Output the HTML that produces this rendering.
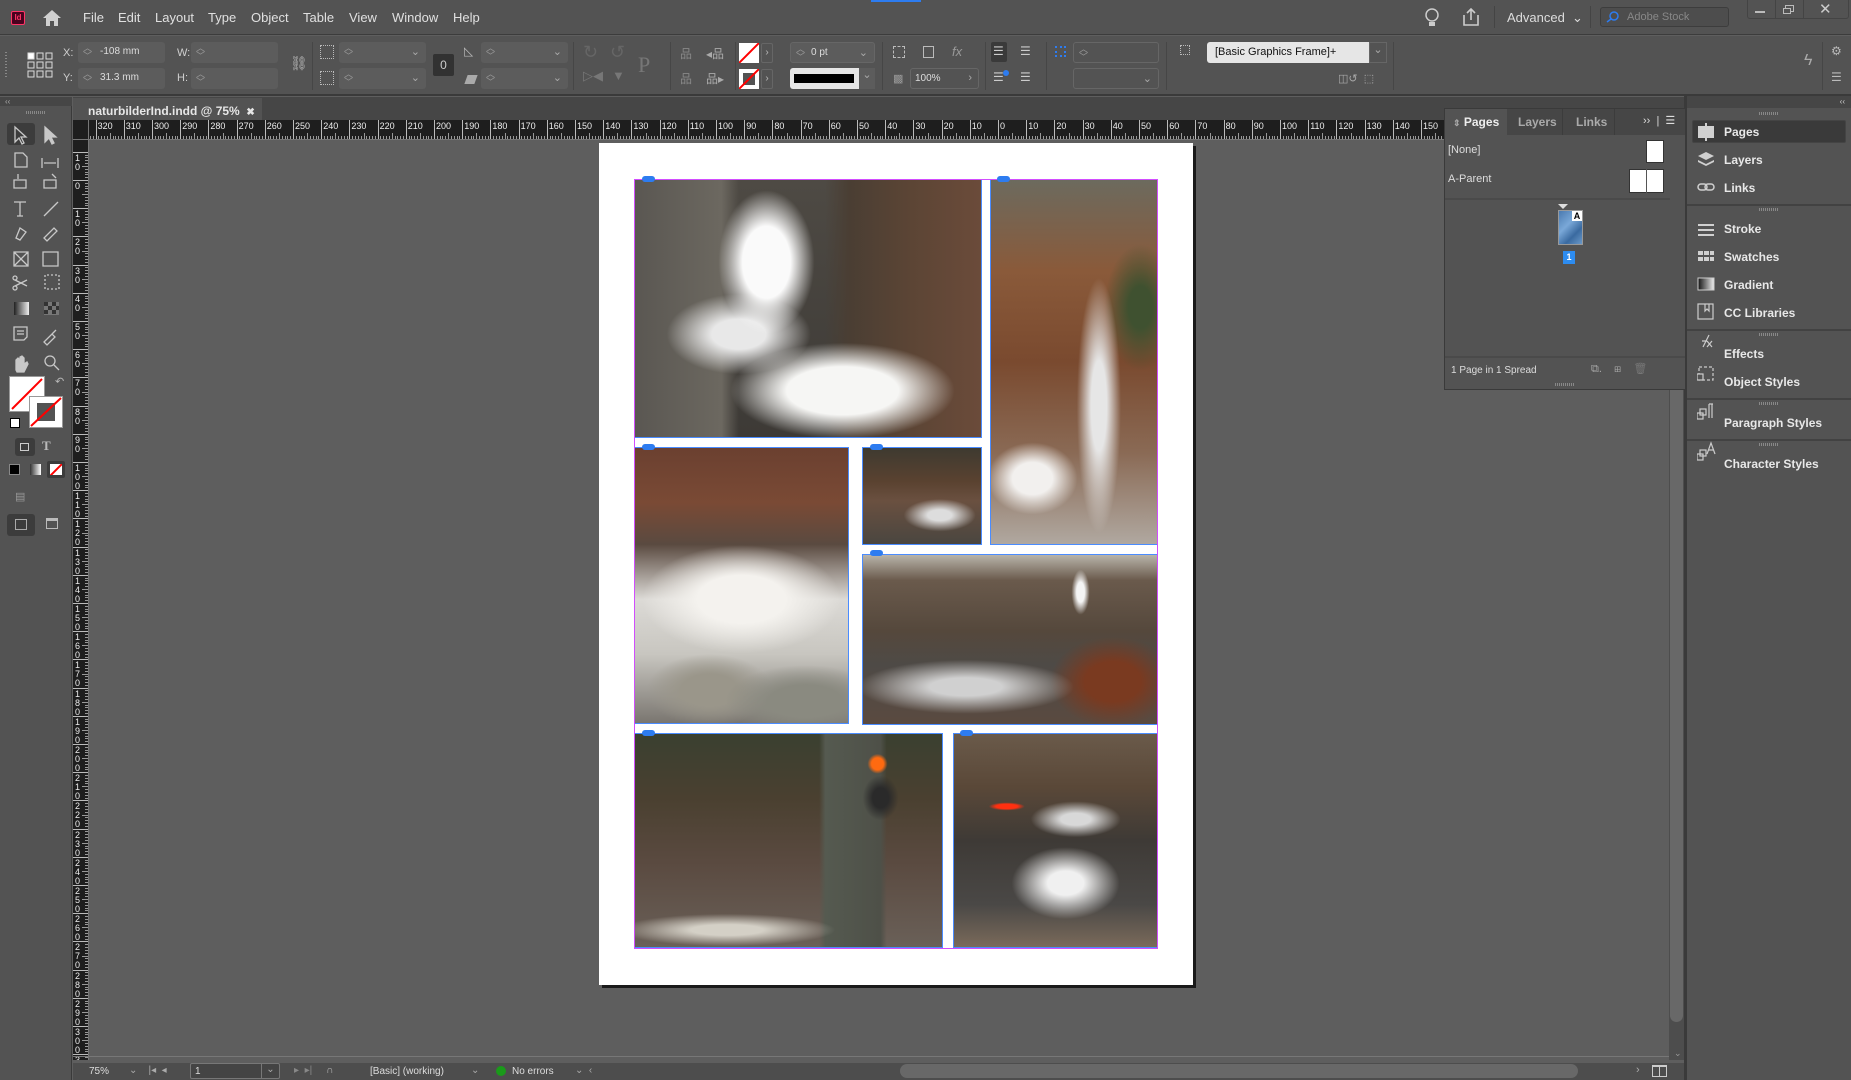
<!DOCTYPE html>
<html><head><meta charset="utf-8">
<style>
*{margin:0;padding:0;box-sizing:border-box}
body{width:1851px;height:1080px;overflow:hidden;background:#5e5e5e;font-family:"Liberation Sans",Arial,sans-serif;font-size:12px;color:#d6d6d6;position:relative}
.a{position:absolute}
.menu span{position:absolute;top:10px;font-size:13px;color:#e0e0e0}
.fld{position:absolute;background:#5c5c5c;border-radius:3px;height:21px}
.fld .sp{position:absolute;left:5px;top:2px;color:#999;font-size:9px;line-height:8px}
.fld .dd{position:absolute;right:6px;top:3px;color:#aaa;font-size:11px}
.lbl{position:absolute;color:#cfcfcf;font-size:11px}
.ic{position:absolute;color:#b8b8b8}
.photo{position:absolute;border:1px solid #4a8cff;overflow:hidden}
.lnk{position:absolute;width:13px;height:6px;background:#2d7cf0;border-radius:3px}
.dock div.it{position:absolute;left:1724px;font-size:12px;font-weight:bold;color:#e8e8e8}
.dock .sep{position:absolute;left:1687px;width:164px;height:2px;background:#424242}
.grip{position:absolute;width:20px;height:3px;background:repeating-linear-gradient(90deg,#888 0 1px,transparent 1px 2px)}
</style></head><body>

<!-- menu bar -->
<div class="a" style="left:0;top:0;width:1851px;height:35px;background:#535353;border-bottom:1px solid #3c3c3c"></div>
<div class="a" style="left:871px;top:0;width:50px;height:2px;background:#2d7cf0"></div>
<div class="a" style="left:11px;top:11px;width:14px;height:14px;background:#49021f;border:1px solid #ff3366;border-radius:2px;color:#ff3366;font-size:8px;line-height:12px;text-align:center;font-weight:bold">Id</div>
<svg class="a" style="left:42px;top:9px" width="20" height="18"><path d="M10 1L1 9h3v8h4v-5h4v5h4V9h3z" fill="#d0d0d0"/></svg>
<div class="menu">
<span style="left:83px">File</span><span style="left:118px">Edit</span><span style="left:155px">Layout</span><span style="left:208px">Type</span><span style="left:251px">Object</span><span style="left:303px">Table</span><span style="left:349px">View</span><span style="left:392px">Window</span><span style="left:453px">Help</span>
</div>
<svg class="a" style="left:1424px;top:7px" width="16" height="22"><circle cx="8" cy="8" r="6" fill="none" stroke="#ccc" stroke-width="1.5"/><rect x="5" y="15" width="6" height="4" fill="#ccc"/></svg>
<svg class="a" style="left:1462px;top:7px" width="18" height="20"><path d="M2 8v10h14V8M9 2v11M5 6l4-4 4 4" fill="none" stroke="#ccc" stroke-width="1.6"/></svg>
<div class="a" style="left:1494px;top:6px;width:1px;height:22px;background:#444"></div>
<div class="a" style="left:1507px;top:10px;font-size:13px;color:#ddd">Advanced&nbsp;&nbsp;⌄</div>
<div class="a" style="left:1590px;top:6px;width:1px;height:22px;background:#444"></div>
<div class="a" style="left:1600px;top:7px;width:129px;height:20px;border:1px solid #3d3d3d;border-radius:3px;background:#4d4d4d;color:#888;font-size:11px;padding:3px 0 0 26px">Adobe Stock</div>
<svg class="a" style="left:1605px;top:11px" width="16" height="12"><circle cx="9" cy="5" r="4" fill="none" stroke="#2d7cf0" stroke-width="1.5"/><path d="M6 8L2 11" stroke="#2d7cf0" stroke-width="1.5"/></svg>
<div class="a" style="left:1747px;top:0;width:102px;height:19px;border:1px solid #444;border-top:none;border-radius:0 0 3px 3px"></div>
<div class="a" style="left:1775px;top:0;width:1px;height:18px;background:#444"></div><div class="a" style="left:1803px;top:0;width:1px;height:18px;background:#444"></div>
<div class="a" style="left:1755px;top:11px;width:10px;height:2px;background:#bbb"></div>
<div class="a" style="left:1785px;top:5px;width:9px;height:7px;border:1px solid #bbb"></div><div class="a" style="left:1783px;top:8px;width:8px;height:6px;border:1px solid #bbb;background:#535353"></div>
<div class="a" style="left:1819px;top:0;font-size:15px;color:#ccc">✕</div>

<!-- control bar -->
<div class="a" style="left:0;top:36px;width:1851px;height:60px;background:#535353;border-bottom:2px solid #3a3a3a"></div>
<div class="a" style="left:5px;top:52px;width:2px;height:26px;background:repeating-linear-gradient(#888 0 1px,transparent 1px 3px)"></div>
<svg class="a" style="left:27px;top:52px" width="26" height="26"><g fill="none" stroke="#ddd"><rect x="1" y="1" width="6" height="6" fill="#fff"/><rect x="10" y="1" width="6" height="6"/><rect x="19" y="1" width="6" height="6"/><rect x="1" y="10" width="6" height="6"/><rect x="10" y="10" width="6" height="6"/><rect x="19" y="10" width="6" height="6"/><rect x="1" y="19" width="6" height="6"/><rect x="10" y="19" width="6" height="6"/><rect x="19" y="19" width="6" height="6"/></g></svg>
<div class="lbl" style="left:63px;top:47px">X:</div><div class="lbl" style="left:63px;top:72px">Y:</div>
<div class="fld" style="left:78px;top:42px;width:87px"><div class="sp">︿<br>﹀</div><span style="position:absolute;left:22px;top:4px;font-size:10px;color:#ddd">-108 mm</span></div>
<div class="fld" style="left:78px;top:68px;width:87px"><div class="sp">︿<br>﹀</div><span style="position:absolute;left:22px;top:4px;font-size:10px;color:#ddd">31.3 mm</span></div>
<div class="lbl" style="left:177px;top:47px">W:</div><div class="lbl" style="left:177px;top:72px">H:</div>
<div class="fld" style="left:191px;top:42px;width:87px"><div class="sp">︿<br>﹀</div></div>
<div class="fld" style="left:191px;top:68px;width:87px"><div class="sp">︿<br>﹀</div></div>
<div class="ic" style="left:290px;top:55px;font-size:14px">⛓</div>
<div class="a" style="left:312px;top:42px;width:1px;height:48px;background:#464646"></div>
<div class="a" style="left:320px;top:45px;width:14px;height:14px;border:1px dotted #bbb"></div>
<div class="a" style="left:320px;top:71px;width:14px;height:14px;border:1px dotted #bbb"></div>
<div class="fld" style="left:339px;top:42px;width:87px"><div class="sp">︿<br>﹀</div><div class="dd">⌄</div></div>
<div class="fld" style="left:339px;top:68px;width:87px"><div class="sp">︿<br>﹀</div><div class="dd">⌄</div></div>
<div class="a" style="left:433px;top:54px;width:21px;height:22px;background:#323232;border-radius:2px;color:#ccc;font-size:12px;text-align:center;line-height:22px">0</div>
<div class="ic" style="left:464px;top:44px;font-size:12px">◺</div>
<div class="a" style="left:466px;top:75px;width:10px;height:9px;background:#aaa;transform:skewX(-20deg)"></div>
<div class="fld" style="left:481px;top:42px;width:87px"><div class="sp">︿<br>﹀</div><div class="dd">⌄</div></div>
<div class="fld" style="left:481px;top:68px;width:87px"><div class="sp">︿<br>﹀</div><div class="dd">⌄</div></div>
<div class="a" style="left:573px;top:42px;width:1px;height:48px;background:#464646"></div>
<div class="ic" style="left:583px;top:42px;font-size:18px;color:#666">↻</div><div class="ic" style="left:610px;top:42px;font-size:18px;color:#666">↺</div>
<div class="ic" style="left:583px;top:68px;font-size:13px;color:#777">▷◀</div><div class="ic" style="left:612px;top:68px;font-size:13px;color:#777">▼</div>
<div class="a" style="left:638px;top:52px;font-family:'Liberation Serif',serif;font-size:22px;color:#777">P</div>
<div class="a" style="left:670px;top:42px;width:1px;height:48px;background:#464646"></div>
<div class="ic" style="left:680px;top:45px;font-size:12px;color:#888">品</div><div class="ic" style="left:706px;top:45px;font-size:12px;color:#aaa">◂品</div>
<div class="ic" style="left:680px;top:70px;font-size:12px;color:#888">品</div><div class="ic" style="left:706px;top:70px;font-size:12px;color:#aaa">品▸</div>
<div class="a" style="left:735px;top:42px;width:1px;height:48px;background:#464646"></div>
<svg class="a" style="left:739px;top:43px" width="20" height="20"><rect width="20" height="20" fill="#fff"/><path d="M0 20L20 0" stroke="#f00" stroke-width="2"/></svg>
<svg class="a" style="left:739px;top:69px" width="20" height="20"><rect width="20" height="20" fill="#fff"/><rect x="4" y="4" width="12" height="12" fill="#535353"/><path d="M0 20L20 0" stroke="#f00" stroke-width="2"/></svg>
<div class="a" style="left:761px;top:43px;width:12px;height:20px;border:1px solid #666;border-radius:2px;color:#bbb;font-size:10px;text-align:center;line-height:18px">›</div>
<div class="a" style="left:761px;top:69px;width:12px;height:20px;border:1px solid #666;border-radius:2px;color:#bbb;font-size:10px;text-align:center;line-height:18px">›</div>
<div class="fld" style="left:790px;top:42px;width:85px;border:1px solid #666"><div class="sp">︿<br>﹀</div><span style="position:absolute;left:20px;top:4px;font-size:10px;color:#ddd">0 pt</span><div class="dd">⌄</div></div>
<div class="a" style="left:790px;top:68px;width:85px;height:21px;background:#e6e6e6;border-radius:3px"><div style="position:absolute;left:4px;top:6px;width:60px;height:9px;background:#000"></div><div style="position:absolute;right:0;top:0;width:16px;height:21px;background:#5c5c5c;color:#aaa;text-align:center;font-size:11px">⌄</div></div>
<div class="a" style="left:882px;top:42px;width:1px;height:48px;background:#464646"></div>
<div class="a" style="left:893px;top:46px;width:12px;height:12px;border:1px dashed #bbb"></div>
<div class="a" style="left:923px;top:46px;width:11px;height:12px;border:1px solid #bbb"></div>
<div class="ic" style="left:952px;top:44px;font-style:italic;font-size:13px;color:#999">fx</div>
<div class="ic" style="left:893px;top:72px;font-size:11px;color:#999">▩</div>
<div class="fld" style="left:910px;top:68px;width:69px;border:1px solid #666;background:#535353"><span style="position:absolute;left:4px;top:4px;font-size:10px;color:#ddd">100%</span><div class="dd">›</div></div>
<div class="a" style="left:985px;top:42px;width:1px;height:48px;background:#464646"></div>
<div class="a" style="left:991px;top:42px;width:16px;height:20px;background:#3a3a3a;border-radius:2px"></div>
<div class="ic" style="left:993px;top:44px;font-size:12px;color:#ccc">☰</div><div class="ic" style="left:1020px;top:44px;font-size:12px;color:#ccc">☰</div>
<div class="ic" style="left:993px;top:70px;font-size:12px;color:#ccc">☰</div><div class="a" style="left:1003px;top:70px;width:6px;height:6px;border-radius:3px;background:#2d7cf0"></div><div class="ic" style="left:1020px;top:70px;font-size:12px;color:#ccc">☰</div>
<div class="a" style="left:1046px;top:42px;width:1px;height:48px;background:#464646"></div>
<div class="a" style="left:1055px;top:46px;width:11px;height:11px;border:2px dotted #2d7cf0"></div>
<div class="fld" style="left:1073px;top:42px;width:86px;border:1px solid #666;background:#535353"><div class="sp">︿<br>﹀</div></div>
<div class="fld" style="left:1073px;top:68px;width:86px;border:1px solid #666;background:#535353"><div class="dd">⌄</div></div>
<div class="a" style="left:1166px;top:42px;width:1px;height:48px;background:#464646"></div>
<div class="a" style="left:1180px;top:45px;width:10px;height:10px;border:1px dotted #bbb"></div>
<div class="a" style="left:1207px;top:42px;width:180px;height:21px;background:#e6e6e6;border-radius:3px;color:#111;font-size:11px;padding:4px 0 0 8px">[Basic Graphics Frame]+<div style="position:absolute;right:0;top:0;width:18px;height:21px;background:#535353;border:1px solid #666;color:#aaa;text-align:center;font-size:11px">⌄</div></div>
<div class="ic" style="left:1338px;top:72px;font-size:11px;color:#aaa">◫↺&nbsp;&nbsp;⬚</div>
<div class="a" style="left:1393px;top:42px;width:1px;height:48px;background:#464646"></div>
<div class="ic" style="left:1804px;top:52px;font-size:16px;color:#aaa">ϟ</div>
<div class="a" style="left:1822px;top:42px;width:1px;height:48px;background:#464646"></div>
<div class="ic" style="left:1831px;top:44px;font-size:12px;color:#bbb">⚙</div>
<div class="ic" style="left:1831px;top:70px;font-size:12px;color:#bbb">☰</div>

<!-- tools panel -->
<div class="a" style="left:0;top:97px;width:72px;height:983px;background:#535353;border-right:1px solid #3a3a3a"></div>
<div class="a" style="left:0;top:97px;width:72px;height:9px;background:#464646;color:#aaa;font-size:8px;padding-left:5px;line-height:9px">‹‹</div>
<div class="grip" style="left:26px;top:111px"></div>
<div class="a" style="left:7px;top:123px;width:28px;height:22px;background:#3c3c3c;border-radius:3px"></div>
<svg class="a" style="left:0;top:120px" width="72" height="420">
<g fill="none" stroke="#c8c8c8" stroke-width="1.3">
<path d="M15 7l0 15 4-4 3 6 2-1-3-6 5 0z"/>
<path d="M45 7l0 15 4-4 3 6 2-1-3-6 5 0z" fill="#c8c8c8"/>
<path d="M15 33h8l4 4v10h-12z"/><path d="M42 38v10M58 38v10M44 43h12"/>
<path d="M14 60h12v8h-12zM18 54v5"/><path d="M44 60h12v8h-12zM52 54l4 4"/>
<path d="M14 82h12M20 82v14M17 96h6"/><path d="M44 96l14-14"/>
<path d="M16 118l4-10 6 4-6 8z"/><path d="M44 118l10-10 3 3-10 10z"/>
<path d="M14 132h14v14h-14zM14 132l14 14M28 132l-14 14"/><path d="M43 132h15v14h-15z"/>
<path d="M15 160l12 6M15 166l12-6"/><circle cx="15" cy="158" r="2"/><circle cx="15" cy="168" r="2"/><path d="M45 155v14h14v-14z" stroke-dasharray="2 2"/>
</g>
<defs><linearGradient id="g1"><stop offset="0" stop-color="#222"/><stop offset="1" stop-color="#eee"/></linearGradient></defs>
<rect x="14" y="182" width="15" height="13" fill="url(#g1)"/>
<rect x="44" y="182" width="15" height="13" fill="#777"/><rect x="44" y="182" width="4" height="4" fill="#333"/><rect x="52" y="182" width="4" height="4" fill="#333"/><rect x="48" y="186" width="4" height="4" fill="#333"/><rect x="56" y="186" width="3" height="4" fill="#333"/><rect x="44" y="190" width="4" height="4" fill="#333"/><rect x="52" y="190" width="4" height="4" fill="#333"/>
<g fill="none" stroke="#c8c8c8" stroke-width="1.3"><path d="M14 207h13v10l-3 3h-10zM17 211h7M17 214h7"/><path d="M44 222l8-8 3 3-8 8zM52 214l4-4"/>
<path d="M16 250v-10l2-2 2 2v-3l2-1 2 2v6l3-2 1 2-4 8h-7z" fill="#c8c8c8"/><circle cx="50" cy="241" r="5"/><path d="M54 245l5 5"/></g>
</svg>
<div class="a" style="left:9px;top:376px;width:36px;height:36px;background:#fff;border:1px solid #999"><svg width="34" height="34"><path d="M2 32L32 2" stroke="#f00" stroke-width="2"/></svg></div>
<div class="a" style="left:29px;top:396px;width:34px;height:32px;background:#fff;border:1px solid #999"><div style="position:absolute;left:7px;top:6px;width:18px;height:18px;background:#535353"></div><svg width="32" height="30" style="position:absolute;left:0;top:0"><path d="M1 29L31 1" stroke="#f00" stroke-width="2"/></svg></div>
<div class="ic" style="left:55px;top:375px;font-size:11px">↶</div>
<div class="a" style="left:10px;top:418px;width:10px;height:10px;background:#fff;border:1px solid #000"></div>
<div class="a" style="left:15px;top:438px;width:20px;height:18px;background:#3c3c3c;border-radius:3px"></div><div class="a" style="left:20px;top:443px;width:9px;height:8px;border:1px solid #ccc"></div>
<div class="a" style="left:42px;top:438px;font-family:'Liberation Serif',serif;font-weight:bold;color:#bbb;font-size:13px">T</div>
<div class="a" style="left:9px;top:464px;width:11px;height:11px;background:#000;border:1px solid #888"></div>
<div class="a" style="left:30px;top:464px;width:11px;height:11px;background:linear-gradient(90deg,#333,#fff)"></div>
<div class="a" style="left:47px;top:461px;width:18px;height:17px;background:#3c3c3c;border-radius:2px"></div><div class="a" style="left:50px;top:464px;width:12px;height:11px;background:#fff;overflow:hidden"><div style="width:18px;height:2px;background:#f00;transform:translate(-3px,5px) rotate(-45deg)"></div></div>
<div class="ic" style="left:15px;top:490px;font-size:11px;color:#999">▤</div>
<div class="a" style="left:7px;top:514px;width:28px;height:22px;background:#3c3c3c;border-radius:3px"></div><div class="a" style="left:15px;top:519px;width:12px;height:11px;border:1px solid #aaa"></div>
<div class="a" style="left:46px;top:518px;width:12px;height:11px;border:1px solid #bbb;border-top-width:3px"></div>

<!-- tab bar -->
<div class="a" style="left:73px;top:97px;width:1614px;height:23px;background:#464646"></div>
<div class="a" style="left:73px;top:98px;width:189px;height:23px;background:#535353;font-weight:bold;font-size:12px;color:#e6e6e6;padding:6px 0 0 15px">naturbilderInd.indd @ 75% &nbsp;<span style="font-size:10px">✖</span></div>

<!-- rulers -->
<div class="a" id="hr" style="left:73px;top:120px;width:1612px;height:20px;background:#1e1e1e;overflow:hidden;border-bottom:1px solid #777"></div>
<div class="a" id="vr" style="left:73px;top:120px;width:16px;height:940px;background:#1e1e1e;overflow:hidden;border-right:1px solid #777"></div>
<div class="a" style="left:73px;top:120px;width:16px;height:20px;background:#1e1e1e;border-right:1px solid #777;border-bottom:1px solid #777"></div>

<!-- page -->
<div class="a" style="left:602px;top:146px;width:594px;height:842px;background:#1a1a1a"></div>
<div class="a" style="left:599px;top:143px;width:594px;height:842px;background:#fff"></div>

<div class="photo" style="left:634px;top:179px;width:348px;height:259px;background:
radial-gradient(ellipse 60px 90px at 38% 32%,#fafafa 40%,transparent 80%),
radial-gradient(ellipse 140px 60px at 60% 82%,#f6f6f4 40%,transparent 80%),
radial-gradient(ellipse 90px 50px at 30% 60%,#e8e8e8 30%,transparent 80%),
linear-gradient(90deg,#5a5752 0%,#6c6860 25%,transparent 30%,transparent 55%,#4a3e33 62%,#5c4535 80%,#6b4b3a 100%),
linear-gradient(#4e4a44,#3d3a36)"></div>
<div class="photo" style="left:990px;top:179px;width:168px;height:366px;background:
radial-gradient(ellipse 50px 40px at 25% 82%,#f2f0ee 40%,transparent 90%),
radial-gradient(ellipse 26px 150px at 65% 62%,#e6e6e6 30%,transparent 85%),
radial-gradient(ellipse 40px 70px at 90% 35%,#3f5130 30%,transparent 90%),
linear-gradient(#6c6a5e 0%,#8a5a3a 25%,#7a4a2f 50%,#8a6a55 75%,#b0a8a0 100%)"></div>
<div class="photo" style="left:634px;top:447px;width:215px;height:277px;background:
radial-gradient(ellipse 90px 40px at 80% 92%,#8a8a80 40%,transparent 90%),
radial-gradient(ellipse 70px 40px at 35% 88%,#9a968a 40%,transparent 90%),
radial-gradient(ellipse 110px 60px at 50% 55%,#f4f2ee 40%,transparent 90%),
linear-gradient(#6b4030 0%,#7a4a35 20%,#5a4a40 35%,#dcdad6 55%,#c8c6c0 75%,#7a7670 100%)"></div>
<div class="photo" style="left:862px;top:447px;width:120px;height:98px;background:
radial-gradient(ellipse 40px 18px at 65% 70%,#ddd 30%,transparent 90%),
linear-gradient(#3e3a30 0%,#5a4230 35%,#6a5040 55%,#4a4640 100%)"></div>
<div class="photo" style="left:862px;top:554px;width:296px;height:171px;background:
radial-gradient(ellipse 10px 25px at 74% 22%,#f4f4f4 40%,transparent 90%),
radial-gradient(ellipse 120px 30px at 35% 78%,#d0d0d0 30%,transparent 90%),
radial-gradient(ellipse 70px 50px at 85% 75%,#7a3a20 40%,transparent 90%),
linear-gradient(#b8b4aa 0%,#6a5a4c 15%,#55483c 45%,#4e4a46 65%,#5a4a40 100%)"></div>
<div class="photo" style="left:634px;top:733px;width:309px;height:215px;background:
radial-gradient(ellipse 10px 10px at 79% 14%,#ff6a10 60%,transparent 100%),
radial-gradient(ellipse 20px 25px at 80% 30%,#2a2a2a 40%,transparent 90%),
radial-gradient(ellipse 120px 18px at 30% 92%,#d4d0c6 30%,transparent 90%),
linear-gradient(90deg,transparent 60%,#555a50 62%,#4e5048 80%,transparent 82%),
linear-gradient(#3a4030 0%,#4a4030 30%,#5a4a40 60%,#6a6058 100%)"></div>
<div class="photo" style="left:953px;top:733px;width:205px;height:215px;background:
radial-gradient(ellipse 18px 4px at 26% 34%,#ff3010 60%,transparent 100%),
radial-gradient(ellipse 60px 40px at 55% 70%,#f0f0f0 30%,transparent 90%),
radial-gradient(ellipse 50px 20px at 60% 40%,#d8d8d8 30%,transparent 90%),
linear-gradient(#6a5a4a 0%,#5a4838 25%,#3e3a36 50%,#4a4846 80%,#7a6a5a 100%)"></div>
<div class="a" style="left:634px;top:179px;width:524px;height:770px;border:1px solid #d24dff"></div>
<div class="lnk" style="left:642px;top:176px"></div><div class="lnk" style="left:997px;top:176px"></div>
<div class="lnk" style="left:642px;top:444px"></div><div class="lnk" style="left:870px;top:444px"></div>
<div class="lnk" style="left:870px;top:550px"></div><div class="lnk" style="left:642px;top:730px"></div><div class="lnk" style="left:960px;top:730px"></div>

<!-- scrollbars -->
<div class="a" style="left:1669px;top:120px;width:16px;height:940px;background:#4d4d4d"></div>
<div class="a" style="left:1670px;top:120px;width:13px;height:902px;background:#686868;border-radius:0 0 7px 7px"></div>
<div class="a" style="left:1674px;top:1048px;font-size:9px;color:#999">⌄</div>
<div class="a" style="left:1684px;top:96px;width:3px;height:984px;background:#3a3a3a"></div>
<div class="a" style="left:73px;top:1056px;width:1596px;height:1px;background:#777"></div>
<div class="a" style="left:73px;top:1063px;width:1611px;height:17px;background:#4d4d4d"></div>
<div class="a" style="left:900px;top:1064px;width:678px;height:14px;background:#686868;border-radius:7px"></div>
<div class="a" style="left:89px;top:1066px;font-size:10px;color:#ddd">75%</div>
<div class="a" style="left:129px;top:1065px;font-size:10px;color:#aaa">⌄&nbsp;&nbsp;&nbsp;&nbsp;|◂&nbsp;&nbsp;◂</div>
<div class="a" style="left:190px;top:1063px;width:90px;height:16px;border:1px solid #777;border-radius:2px;background:#444;font-size:10px;color:#ddd;padding:2px 4px">1<span style="position:absolute;right:0;top:0;width:18px;height:14px;border-left:1px solid #777;text-align:center;color:#aaa">⌄</span></div>
<div class="a" style="left:294px;top:1065px;font-size:10px;color:#888">▸&nbsp;&nbsp;▸|&nbsp;&nbsp;&nbsp;&nbsp;&nbsp;<span style="color:#bbb">∩</span></div>
<div class="a" style="left:370px;top:1066px;font-size:10px;color:#ddd">[Basic] (working)</div>
<div class="a" style="left:471px;top:1065px;font-size:10px;color:#aaa">⌄</div>
<div class="a" style="left:496px;top:1066px;width:10px;height:10px;border-radius:5px;background:#1a9a1a"></div>
<div class="a" style="left:512px;top:1066px;font-size:10px;color:#ddd">No errors</div>
<div class="a" style="left:575px;top:1065px;font-size:10px;color:#aaa">⌄&nbsp;&nbsp;‹</div>
<div class="a" style="left:1636px;top:1064px;font-size:11px;color:#aaa">›</div>
<div class="a" style="left:1652px;top:1065px;width:15px;height:12px;border:1px solid #ccc;border-top-width:2px"></div><div class="a" style="left:1659px;top:1065px;width:1px;height:12px;background:#ccc"></div>

<!-- pages panel -->
<div class="a" style="left:1444px;top:108px;width:242px;height:282px;background:#535353;border:1px solid #3a3a3a"></div>
<div class="a" style="left:1445px;top:109px;width:240px;height:26px;background:#464646"></div>
<div class="a" style="left:1445px;top:109px;width:62px;height:27px;background:#535353;font-weight:bold;color:#eee;font-size:12px;padding:6px 0 0 8px"><span style="font-size:9px;color:#aaa">⇕</span> Pages</div>
<div class="a" style="left:1507px;top:109px;width:56px;height:26px;border-right:1px solid #3c3c3c;color:#aaa;font-weight:bold;font-size:12px;padding:6px 0 0 11px">Layers</div>
<div class="a" style="left:1563px;top:109px;width:52px;height:26px;border-right:1px solid #3c3c3c;color:#aaa;font-weight:bold;font-size:12px;padding:6px 0 0 13px">Links</div>
<div class="a" style="left:1643px;top:114px;color:#ddd;font-size:11px">››&nbsp;&nbsp;|&nbsp;&nbsp;☰</div>
<div class="a" style="left:1448px;top:144px;color:#ddd;font-size:11px">[None]</div>
<div class="a" style="left:1646px;top:140px;width:18px;height:23px;background:#fff;border:1px solid #333"></div>
<div class="a" style="left:1448px;top:173px;color:#ddd;font-size:11px">A-Parent</div>
<div class="a" style="left:1629px;top:169px;width:35px;height:24px;background:#fff;border:1px solid #333"></div><div class="a" style="left:1646px;top:169px;width:1px;height:24px;background:#555"></div>
<div class="a" style="left:1445px;top:198px;width:225px;height:2px;background:#4a4a4a"></div>
<div class="a" style="left:1558px;top:204px;width:0;height:0;border-left:5px solid transparent;border-right:5px solid transparent;border-top:5px solid #ddd"></div>
<div class="a" style="left:1558px;top:210px;width:25px;height:35px;background:linear-gradient(135deg,#4a7ab0,#7aa8d8 40%,#3a6aa0 70%,#6a98c8);border:1px solid #999"></div>
<div class="a" style="left:1572px;top:211px;width:10px;height:10px;background:#fff;color:#000;font-size:9px;font-weight:bold;text-align:center;line-height:10px">A</div>
<div class="a" style="left:1563px;top:251px;width:12px;height:13px;background:#2d8cf0;color:#fff;font-size:9px;font-weight:bold;text-align:center;line-height:13px">1</div>
<div class="a" style="left:1445px;top:356px;width:240px;height:2px;background:#4a4a4a"></div>
<div class="a" style="left:1451px;top:365px;color:#ddd;font-size:10px">1 Page in 1 Spread</div>
<div class="a" style="left:1591px;top:362px;color:#aaa;font-size:11px">⧉.&nbsp;&nbsp;&nbsp;&nbsp;⊞&nbsp;&nbsp;&nbsp;&nbsp;<span style="color:#777">🗑</span></div>
<div class="grip" style="left:1555px;top:383px"></div>

<!-- right dock -->
<div class="a" style="left:1687px;top:96px;width:164px;height:984px;background:#535353"></div>
<div class="a" style="left:1687px;top:96px;width:164px;height:12px;background:#464646;color:#ccc;font-size:8px;text-align:right;padding-right:6px;line-height:12px">‹‹</div>
<div class="dock">
<div class="grip" style="left:1759px;top:112px"></div>
<div class="a" style="left:1692px;top:120px;width:154px;height:23px;background:#3a3a3a;border:1px solid #444;border-radius:2px"></div>
<div class="it" style="top:125px">Pages</div>
<div class="it" style="top:153px">Layers</div>
<div class="it" style="top:181px">Links</div>
<div class="sep" style="top:204px"></div><div class="grip" style="left:1759px;top:208px"></div>
<div class="it" style="top:222px">Stroke</div>
<div class="it" style="top:250px">Swatches</div>
<div class="it" style="top:278px">Gradient</div>
<div class="it" style="top:306px">CC Libraries</div>
<div class="sep" style="top:329px"></div><div class="grip" style="left:1759px;top:333px"></div>
<div class="it" style="top:347px">Effects</div>
<div class="it" style="top:375px">Object Styles</div>
<div class="sep" style="top:398px"></div><div class="grip" style="left:1759px;top:402px"></div>
<div class="it" style="top:416px">Paragraph Styles</div>
<div class="sep" style="top:439px"></div><div class="grip" style="left:1759px;top:443px"></div>
<div class="it" style="top:457px">Character Styles</div>
</div>
<svg class="a" style="left:1697px;top:120px" width="22" height="360">
<g fill="#d0d0d0"><path d="M1 6h7v12H1zM10 6h7v12h-7zM8 3h2v18H8z"/>
<path d="M9 32l8 4-8 4-8-4z"/><path d="M1 40l8 4 8-4v2l-8 4-8-4z"/></g>
<g fill="none" stroke="#d0d0d0" stroke-width="1.5"><rect x="1" y="64" width="9" height="6" rx="3"/><rect x="8" y="64" width="9" height="6" rx="3"/></g>
<g fill="#d0d0d0"><rect x="1" y="104" width="16" height="2"/><rect x="1" y="109" width="16" height="2"/><rect x="1" y="114" width="16" height="2"/>
<rect x="1" y="131" width="5" height="4"/><rect x="7" y="131" width="5" height="4"/><rect x="13" y="131" width="4" height="4"/><rect x="1" y="137" width="5" height="4"/><rect x="7" y="137" width="5" height="4"/><rect x="13" y="137" width="4" height="4"/></g>
<defs><linearGradient id="g2"><stop offset="0" stop-color="#111"/><stop offset="1" stop-color="#eee"/></linearGradient></defs>
<rect x="1" y="158" width="16" height="12" fill="url(#g2)" stroke="#ccc"/>
<g fill="none" stroke="#ccc" stroke-width="1.2"><rect x="1" y="184" width="15" height="15"/><path d="M5 184v-0M8 184v7l2-2 2 2v-7"/>
<path d="M6 227l6-12M5 221h5" /><path d="M10 221l5 6M15 221l-5 6"/>
<rect x="2" y="247" width="14" height="13" stroke-dasharray="3 2"/><rect x="0" y="254" width="6" height="6" fill="#535353"/>
<rect x="0" y="293" width="6" height="6"/><rect x="3" y="289" width="6" height="6"/><path d="M12 298v-14M15 298v-14M12 284h4"/>
<rect x="0" y="334" width="6" height="6"/><rect x="3" y="330" width="6" height="6"/><path d="M10 334l4-11 4 11M11 330h6"/></g>
</svg>

<script>
(function(){
var h=document.getElementById('hr'),s='',u=2.82;
for(var n=-330;n<=160;n+=10){var x=998+n*u-73;
s+='<div style="position:absolute;left:'+x+'px;top:0;width:1px;height:20px;background:#bbb"></div><div style="position:absolute;left:'+(x+2)+'px;top:1px;font-size:9px;color:#eee">'+Math.abs(n)+'</div>';
for(var k=1;k<10;k++){s+='<div style="position:absolute;left:'+(x+k*u)+'px;top:'+(k==5?13:16)+'px;width:1px;height:'+(k==5?7:4)+'px;background:#999"></div>';}}
h.innerHTML=s;
var v=document.getElementById('vr');s='';
for(var n=-10;n<=310;n+=10){var y=180+n*u-120;
s+='<div style="position:absolute;top:'+y+'px;left:0;height:1px;width:16px;background:#bbb"></div><div style="position:absolute;top:'+(y+2)+'px;left:2px;font-size:9px;line-height:9px;color:#eee;width:7px;word-wrap:break-word">'+String(Math.abs(n)).split('').join('<br>')+'</div>';
for(var k=1;k<10;k++){s+='<div style="position:absolute;top:'+(y+k*u)+'px;left:'+(k==5?9:12)+'px;height:1px;width:'+(k==5?7:4)+'px;background:#999"></div>';}}
v.innerHTML=s;
})();
</script>
</body></html>
